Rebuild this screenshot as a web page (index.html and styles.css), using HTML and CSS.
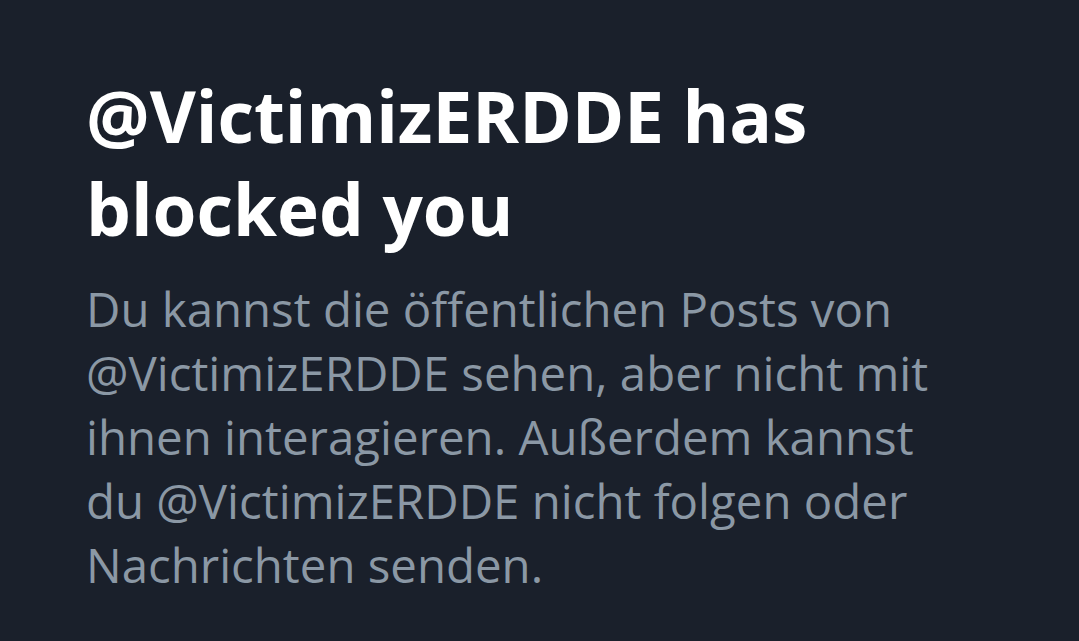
FILE: index.html
```html
<!DOCTYPE html>
<html lang="de">
<head>
<meta charset="utf-8">
<link rel="stylesheet" href="styles.css">
</head>
<body>
<main class="blocked">
  <h1 class="blocked-title">@VictimizERDDE has blocked you</h1>
  <p class="blocked-text">Du kannst die öffentlichen Posts von @VictimizERDDE sehen, aber nicht mit ihnen interagieren. Außerdem kannst du @VictimizERDDE nicht folgen oder Nachrichten senden.</p>
</main>
</body>
</html>
```
FILE: styles.css
```css
html, body {
  margin: 0;
  padding: 0;
  background: #1a202b;
  height: 100%;
}
body {
  font-family: "Open Sans", "Liberation Sans", sans-serif;
}
.blocked {
  padding: 69px 0 0 86px;
  width: 860px;
}
.blocked-title {
  margin: 0;
  color: #ffffff;
  font-size: 71px;
  font-weight: 700;
  line-height: 93px;
}
.blocked-text {
  margin: 22px 0 0;
  color: #8b98a5;
  font-size: 47.4px;
  line-height: 64px;
}
```
